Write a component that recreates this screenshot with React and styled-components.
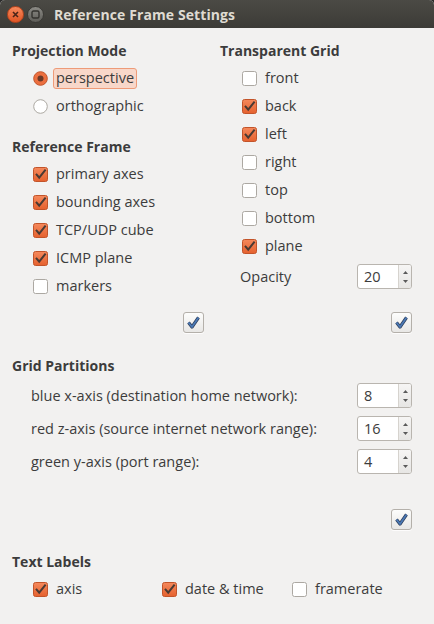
import React from "react";
import { styled, createGlobalStyle } from "styled-components";

const GlobalStyle = createGlobalStyle`
  html, body {
    margin: 0;
    padding: 0;
    background: #2b2b2b;
  }
  body {
    font-family: "Open Sans", "DejaVu Sans", sans-serif;
  }
`;

const Window = styled.div`
  width: 434px;
  height: 624px;
  background: #f2f1f0;
  color: #3c3c3c;
  font-size: 14.5px;
  border-radius: 5px 5px 0 0;
  overflow: hidden;
  display: flex;
  flex-direction: column;
`;

const TitleBar = styled.div`
  height: 28px;
  flex: none;
  display: flex;
  align-items: center;
  padding-left: 7px;
  background: linear-gradient(#4b4a45, #3c3b37);
`;

const WinButton = styled.span`
  width: 17px;
  height: 17px;
  border-radius: 50%;
  margin-right: 3px;
  display: flex;
  align-items: center;
  justify-content: center;
  box-sizing: border-box;
  border: 1px solid ${(p) => (p.$close ? "#b9441c" : "#3a3935")};
  background: ${(p) =>
    p.$close
      ? "linear-gradient(#f7895c, #e05525)"
      : "linear-gradient(#8b8a85, #5e5d58)"};
`;

const Title = styled.span`
  margin-left: 7px;
  color: #dfdbd2;
  font-weight: 700;
  font-size: 14px;
  letter-spacing: 0.1px;
`;

const Content = styled.div`
  padding: 8px 22px 0 12px;
  display: flex;
  flex-direction: column;
`;

const TopGrid = styled.div`
  display: grid;
  grid-template-columns: 208px 1fr;
`;

const Column = styled.div`
  display: flex;
  flex-direction: column;
`;

const Heading = styled.div`
  height: 28px;
  display: flex;
  align-items: center;
  font-weight: 700;
  font-size: 14px;
  margin-top: ${(p) => p.$top || 0}px;
`;

const Option = styled.label`
  height: 28px;
  display: flex;
  align-items: center;
  padding-left: ${(p) => p.$indent ?? 21}px;
`;

const OptionText = styled.span`
  margin-left: 5px;
  padding: 0 2px 1px;
  line-height: 18px;
  border-radius: 3px;
  border: 1px solid ${(p) => (p.$focus ? "#ee9b78" : "transparent")};
  background: ${(p) => (p.$focus ? "#f8d7c9" : "transparent")};
`;

const ButtonRow = styled.div`
  display: flex;
  justify-content: flex-end;
  padding-top: ${(p) => p.$top || 0}px;
  padding-right: ${(p) => p.$right || 0}px;
`;

const ToggleButton = styled.span`
  width: 21px;
  height: 21px;
  box-sizing: border-box;
  border: 1px solid #b4b0aa;
  border-radius: 3px;
  background: linear-gradient(#fdfdfc, #e8e7e5);
  display: flex;
  align-items: center;
  justify-content: center;
  box-shadow: 0 1px 0 rgba(255, 255, 255, 0.8);
`;

const SpinRow = styled.div`
  height: 25px;
  display: flex;
  align-items: center;
  justify-content: space-between;
  padding-left: ${(p) => p.$indent || 0}px;
  margin-top: ${(p) => p.$top || 0}px;
`;

const SpinBox = styled.div`
  width: 55px;
  height: 25px;
  box-sizing: border-box;
  border: 1px solid #b9b5af;
  border-radius: 3px;
  display: flex;
  overflow: hidden;
  background: #fff;
`;

const SpinValue = styled.span`
  flex: 1;
  padding-left: 6px;
  display: flex;
  align-items: center;
  color: #3c3c3c;
`;

const SpinArrows = styled.span`
  width: 13px;
  border-left: 1px solid #d6d3ce;
  background: linear-gradient(#f6f5f4, #e7e6e4);
  display: flex;
  flex-direction: column;
  align-items: center;
  justify-content: space-between;
  padding: 6px 0 5px;
  box-sizing: border-box;
`;

const Partitions = styled.div`
  display: flex;
  flex-direction: column;
  gap: 8px;
  margin-top: 4px;
`;

const LabelsRow = styled.div`
  display: grid;
  grid-template-columns: 129px 130px 1fr;
  padding-left: 21px;
`;

const Check = ({ on }) =>
  on ? (
    <svg width="15" height="15" viewBox="0 0 15 15">
      <defs>
        <linearGradient id="og" x1="0" y1="0" x2="0" y2="1">
          <stop offset="0" stopColor="#f5895c" />
          <stop offset="1" stopColor="#e5612e" />
        </linearGradient>
      </defs>
      <rect x="0.5" y="0.5" width="14" height="14" rx="2" fill="url(#og)" stroke="#c2542a" />
      <path d="M3 6.8 L6.2 10.6 L12.6 2.6" fill="none" stroke="#4a3a33" strokeWidth="2" />
    </svg>
  ) : (
    <svg width="15" height="15" viewBox="0 0 15 15">
      <rect x="0.5" y="0.5" width="14" height="14" rx="2" fill="#fff" stroke="#aca8a2" />
    </svg>
  );

const Radio = ({ on }) => (
  <svg width="15" height="15" viewBox="0 0 15 15">
    {on ? (
      <>
        <circle cx="7.5" cy="7.5" r="6.8" fill="#ec6f3f" stroke="#c2542a" />
        <circle cx="7.5" cy="7.5" r="3" fill="#6b3a28" />
      </>
    ) : (
      <circle cx="7.5" cy="7.5" r="6.8" fill="#fff" stroke="#aca8a2" />
    )}
  </svg>
);

const BlueCheck = () => (
  <svg width="15" height="15" viewBox="0 0 15 15">
    <path d="M2.5 7.5 L6 12 L12.5 2.5" fill="none" stroke="#2e3f5c" strokeWidth="3.2" strokeLinejoin="round" />
    <path d="M2.5 7.5 L6 12 L12.5 2.5" fill="none" stroke="#4b79b5" strokeWidth="1.8" strokeLinejoin="round" />
  </svg>
);

const Spin = ({ value }) => (
  <SpinBox>
    <SpinValue>{value}</SpinValue>
    <SpinArrows>
      <svg width="5" height="3" viewBox="0 0 5 3">
        <path d="M0 3 L2.5 0 L5 3 Z" fill="#5a5a5a" />
      </svg>
      <svg width="5" height="3" viewBox="0 0 5 3">
        <path d="M0 0 L2.5 3 L5 0 Z" fill="#5a5a5a" />
      </svg>
    </SpinArrows>
  </SpinBox>
);

const CheckItem = ({ on, label, indent }) => (
  <Option $indent={indent}>
    <Check on={on} />
    <OptionText>{label}</OptionText>
  </Option>
);

const refFrame = [
  ["primary axes", true],
  ["bounding axes", true],
  ["TCP/UDP cube", true],
  ["ICMP plane", true],
  ["markers", false],
];

const gridSides = [
  ["front", false],
  ["back", true],
  ["left", true],
  ["right", false],
  ["top", false],
  ["bottom", false],
  ["plane", true],
];

const partitions = [
  ["blue x-axis (destination home network):", 8],
  ["red z-axis (source internet network range):", 16],
  ["green y-axis (port range):", 4],
];

export default function App() {
  return (
    <>
      <GlobalStyle />
      <Window>
        <TitleBar>
          <WinButton $close>
            <svg width="7" height="7" viewBox="0 0 7 7">
              <path d="M1 1 L6 6 M6 1 L1 6" stroke="#4a2418" strokeWidth="1.6" />
            </svg>
          </WinButton>
          <WinButton>
            <svg width="9" height="9" viewBox="0 0 9 9">
              <rect x="1" y="1" width="7" height="7" rx="1.5" fill="none" stroke="#34332f" strokeWidth="1.4" />
            </svg>
          </WinButton>
          <Title>Reference Frame Settings</Title>
        </TitleBar>

        <Content>
          <TopGrid>
            <Column>
              <Heading>Projection Mode</Heading>
              <Option>
                <Radio on />
                <OptionText $focus>perspective</OptionText>
              </Option>
              <Option>
                <Radio />
                <OptionText>orthographic</OptionText>
              </Option>
              <Heading $top={12}>Reference Frame</Heading>
              {refFrame.map(([label, on]) => (
                <CheckItem key={label} label={label} on={on} />
              ))}
            </Column>
            <Column>
              <Heading>Transparent Grid</Heading>
              {gridSides.map(([label, on]) => (
                <CheckItem key={label} label={label} on={on} indent={22} />
              ))}
              <SpinRow $indent={20} $top={4}>
                <span>Opacity</span>
                <Spin value={20} />
              </SpinRow>
            </Column>
            <ButtonRow $top={12} $right={16}>
              <ToggleButton>
                <BlueCheck />
              </ToggleButton>
            </ButtonRow>
            <ButtonRow $top={12}>
              <ToggleButton>
                <BlueCheck />
              </ToggleButton>
            </ButtonRow>
          </TopGrid>

          <Heading $top={18}>Grid Partitions</Heading>
          <Partitions>
            {partitions.map(([label, value]) => (
              <SpinRow key={label} $indent={19}>
                <span>{label}</span>
                <Spin value={value} />
              </SpinRow>
            ))}
          </Partitions>
          <ButtonRow $top={35}>
            <ToggleButton>
              <BlueCheck />
            </ToggleButton>
          </ButtonRow>

          <Heading $top={17}>Text Labels</Heading>
          <LabelsRow>
            <CheckItem label="axis" on indent={0} />
            <CheckItem label="date & time" on indent={0} />
            <CheckItem label="framerate" on={false} indent={0} />
          </LabelsRow>
        </Content>
      </Window>
    </>
  );
}
